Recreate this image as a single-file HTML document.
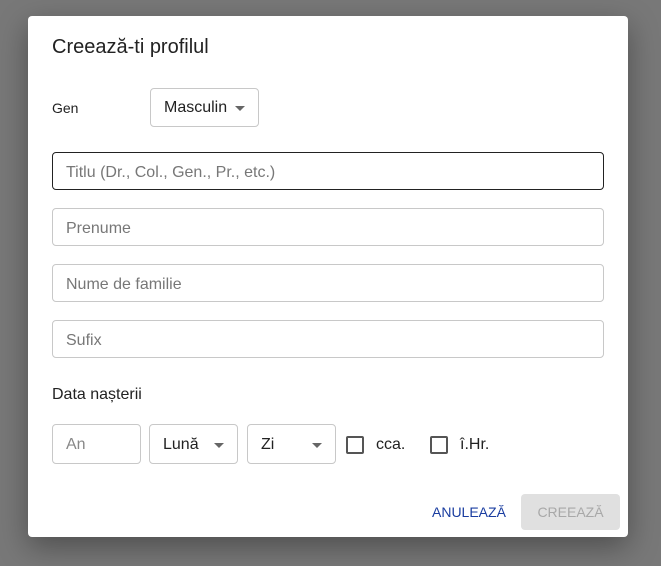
<!DOCTYPE html>
<html><head><meta charset="utf-8"><style>
*{box-sizing:border-box;margin:0;padding:0}
body{width:661px;height:566px;background:#787878;font-family:"Liberation Sans",Arial,sans-serif;position:relative;overflow:hidden}
.d{position:absolute;left:28px;top:16px;width:600px;height:521px;background:#fff;border-radius:4px;box-shadow:0 10px 30px rgba(0,0,0,.35)}
.a{position:absolute}
.in{position:absolute;left:52px;width:552px;height:38px;border:1px solid #c8c8c8;border-radius:4px;font-size:16px;color:#777;padding:2px 13px 0;line-height:36px}
.sel{position:absolute;border:1px solid #c8c8c8;border-radius:4px;font-size:16px;color:#222;padding-left:13px;padding-top:1px}
.tri{position:absolute;width:0;height:0;border-left:5px solid transparent;border-right:5px solid transparent;border-top:5px solid #666}
.cb{position:absolute;width:18px;height:18px;border:2px solid #555;border-radius:2px}
</style></head><body>
<div class="d"></div>
<div class="a" style="left:52px;top:36px;font-size:20px;color:#222">Creează-ti profilul</div>
<div class="a" style="left:52px;top:100px;font-size:14px;color:#222">Gen</div>
<div class="sel" style="left:150px;top:88px;width:109px;height:39px;line-height:36px">Masculin<span class="tri" style="left:84px;top:17px"></span></div>
<div class="in" style="top:152px;border-color:#222">Titlu (Dr., Col., Gen., Pr., etc.)</div>
<div class="in" style="top:208px">Prenume</div>
<div class="in" style="top:264px">Nume de familie</div>
<div class="in" style="top:320px">Sufix</div>
<div class="a" style="left:52px;top:386px;font-size:16px;color:#222">Data nașterii</div>
<div class="sel" style="left:52px;top:424px;width:89px;height:40px;line-height:38px;color:#888">An</div>
<div class="sel" style="left:149px;top:424px;width:89px;height:40px;line-height:38px">Lună<span class="tri" style="left:64px;top:18px"></span></div>
<div class="sel" style="left:247px;top:424px;width:89px;height:40px;line-height:38px">Zi<span class="tri" style="left:64px;top:18px"></span></div>
<div class="cb" style="left:346px;top:436px"></div>
<div class="a" style="left:376px;top:436px;font-size:16px;color:#222">cca.</div>
<div class="cb" style="left:430px;top:436px"></div>
<div class="a" style="left:460px;top:436px;font-size:16px;color:#222">î.Hr.</div>
<div class="a" style="left:432px;top:504px;font-size:14px;color:#1a3da0">ANULEAZĂ</div>
<div class="a" style="left:521px;top:494px;width:99px;height:36px;background:#e0e0e0;border-radius:4px;font-size:14px;color:#a8a8a8;text-align:center;line-height:36px">CREEAZĂ</div>
</body></html>
